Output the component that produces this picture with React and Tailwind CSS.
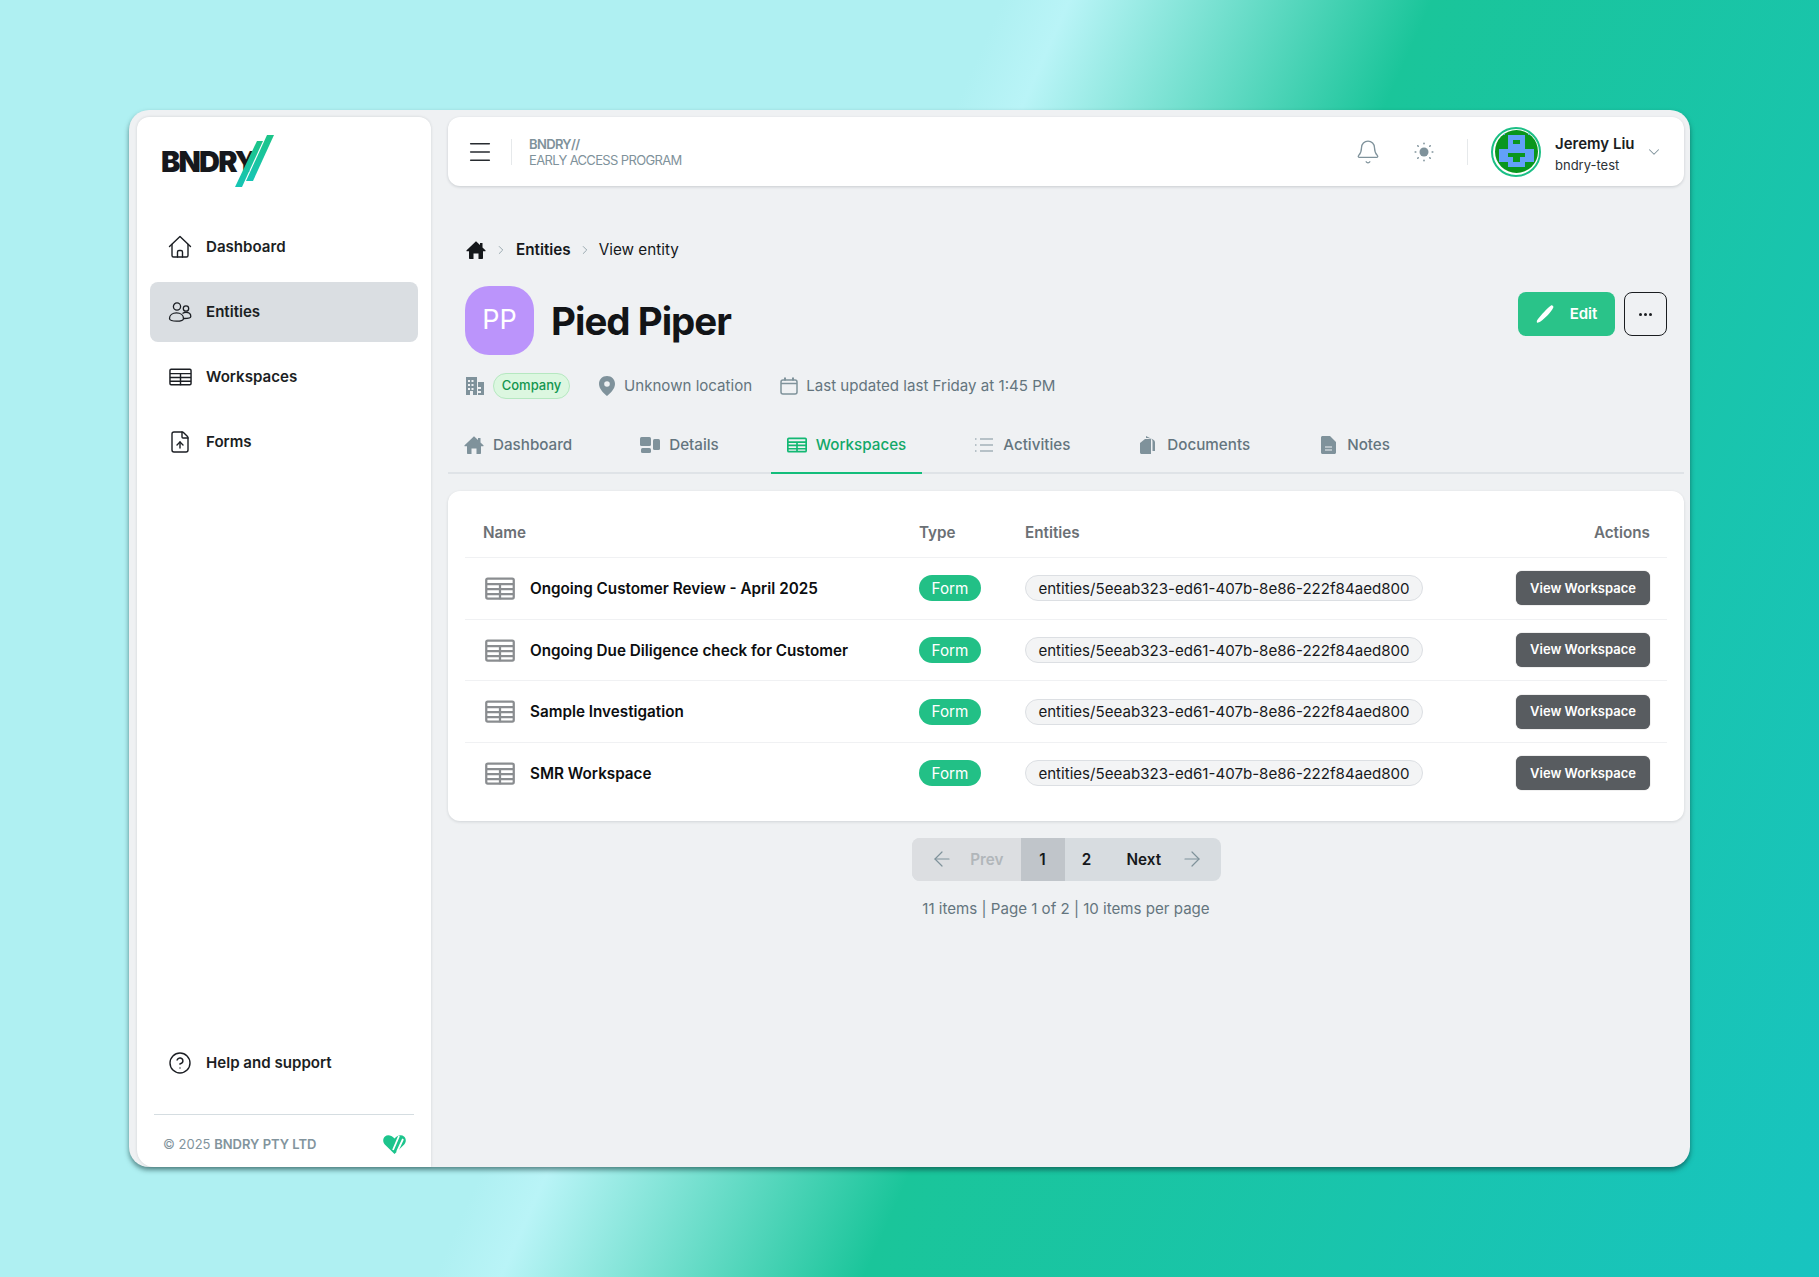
import { ChevronDown, ChevronRight, ArrowLeft, ArrowRight, CircleHelp, FileUp, Bell, Menu } from 'lucide-react';

function Logo() {
  return (
    <div className="relative h-[52px] w-[113px]">
      <span className="absolute left-0 top-[10px] text-[29px] leading-[34px] font-black tracking-[-1.8px] text-[#16181d]">BNDRY</span>
      <svg className="absolute left-0 top-0" width="113" height="52" viewBox="0 0 113 52">
        <defs>
          <linearGradient id="slash" x1="0" y1="0" x2="0" y2="1">
            <stop offset="0" stopColor="#1cc488" />
            <stop offset="1" stopColor="#16c5b5" />
          </linearGradient>
        </defs>
        <polygon points="96,6 102,6 81,52 74,52" fill="url(#slash)" />
        <polygon points="106,0 113,0 92,46 85,46" fill="url(#slash)" />
      </svg>
    </div>
  );
}

function TableIcon({ className, stroke = 'currentColor', width = 1.6 }) {
  return (
    <svg className={className} viewBox="0 0 24 18" fill="none" stroke={stroke} strokeWidth={width}>
      <rect x="1" y="1" width="22" height="16" rx="1.2" />
      <path d="M1 5.5h22M1 9.5h22M1 13.5h22M12 5.5v12" />
    </svg>
  );
}

function UsersIcon() {
  return (
    <svg width="24" height="24" viewBox="0 0 24 24" fill="none" stroke="currentColor" strokeWidth="1.3">
      <circle cx="9" cy="6.5" r="3.6" />
      <circle cx="18" cy="8.5" r="2.7" />
      <path d="M1.5 18.5c0-3.4 3-5.6 7-5.6s7 2.2 7 5.6c0 1.6-3 2.7-7 2.7s-7-1.100-7-2.700z" />
      <path d="M14.500 13.500c1-.8 2.200-1.100 3.500-1.100 2.900 0 4.800 1.700 4.800 4 0 1.500-2.600 2.100-6.800 2.100" />
    </svg>
  );
}

function HomeOutline() {
  return (
    <svg width="24" height="24" viewBox="0 0 24 24" fill="none" stroke="currentColor" strokeWidth="1.4" strokeLinejoin="round" strokeLinecap="round">
      <path d="M1.500 11.500 12 1.500l10.500 10" />
      <path d="M4 9.500v11a1.500 1.500 0 0 0 1.500 1.500h13a1.500 1.500 0 0 0 1.500-1.500v-11" />
      <path d="M9.500 22v-5a1.500 1.500 0 0 1 1.500-1.500h2a1.500 1.500 0 0 1 1.500 1.500v5" />
    </svg>
  );
}

function HomeFill({ className }) {
  return (
    <svg className={className} viewBox="0 0 20 20" fill="currentColor">
      <path d="M10 1.200.6 10.300c-.4.400-.1 1 .4 1H3v6.700c0 .6.400 1 1 1h3.500v-5.500h5V19H16c.6 0 1-.4 1-1v-6.700h2c.5 0 .8-.6.400-1L16.500 7.500V3h-2.500v2.100z" />
    </svg>
  );
}

function Avatar() {
  return (
    <div className="flex h-[50px] w-[50px] items-center justify-center rounded-full border-2 border-[#1cbf85] bg-white">
      <svg className="rounded-full" width="43" height="43" viewBox="0 0 44 44" shapeRendering="crispEdges">
        <rect width="44" height="44" fill="#09961d" />
        <rect x="5" y="0" width="5" height="5" fill="#62a0f8" />
        <rect x="34" y="0" width="5" height="5" fill="#62a0f8" />
        <rect x="13" y="5" width="18" height="15" fill="#62a0f8" />
        <rect x="18" y="10" width="8" height="4" fill="#09961d" />
        <rect x="4" y="19" width="36" height="14" fill="#62a0f8" />
        <rect x="13" y="24" width="18" height="4" fill="#09961d" />
        <rect x="18" y="28" width="8" height="5" fill="#09961d" />
        <rect x="13" y="33" width="18" height="5" fill="#62a0f8" />
      </svg>
    </div>
  );
}

function Sidebar() {
  const items = [
    { label: 'Dashboard', icon: <HomeOutline /> },
    { label: 'Entities', icon: <UsersIcon />, active: true },
    { label: 'Workspaces', icon: <TableIcon className="w-[23px] h-[18px]" width={1.5} /> },
    { label: 'Forms', icon: <FileUp size={24} strokeWidth={1.4} /> },
  ];
  return (
    <aside className="flex w-[294px] shrink-0 flex-col rounded-t-xl rounded-bl-[17px] bg-white shadow-[0_0_3px_rgba(30,40,50,0.15)]">
      <div className="pl-[24px] pt-[18px]">
        <Logo />
      </div>
      <nav className="mt-[30px] flex flex-col gap-[5px] px-[13px]">
        {items.map((item) => (
          <a
            key={item.label}
            className={`flex h-[60px] items-center gap-[14px] rounded-lg pl-[18px] text-[15.1px] font-semibold text-[#1b1e23] ${item.active ? 'bg-[#dadee2]' : ''}`}
          >
            <span className="flex w-[24px] justify-center">{item.icon}</span>
            <span className="pt-[1px]">{item.label}</span>
          </a>
        ))}
      </nav>
      <div className="mt-auto px-[13px]">
        <a className="flex h-[60px] items-center gap-[14px] pl-[18px] text-[15.1px] font-semibold text-[#1b1e23]">
          <span className="flex w-[24px] justify-center">
            <CircleHelp size={24} strokeWidth={1.4} />
          </span>
          <span className="pt-[1px]">Help and support</span>
        </a>
      </div>
      <div className="mx-[17px] mt-[21px] flex h-[53px] items-center justify-between border-t border-[#d5dde1] pl-[9px] pr-[8px] pt-[8px] text-[13px] text-[#82949d]">
        <span>
          © 2025 <b className="font-semibold">BNDRY PTY LTD</b>
        </span>
        <svg width="23" height="20" viewBox="0 0 23 20">
          <path d="M11.500 19 1.800 9.500C-.5 7-.2 3.300 2 1.500 4.300-.4 8-.2 11.500 3.500 15-.2 18.700-.4 21 1.500c2.200 1.800 2.500 5.500.2 8z" fill="#1cc48c" />
          <path d="M10 15 16 1M14 17 20 4" stroke="#fff" strokeWidth="1.800" />
        </svg>
      </div>
    </aside>
  );
}

function Header() {
  return (
    <header className="flex h-[69px] items-center rounded-xl bg-white pl-[23px] pr-[21px] shadow-[0_1px_3px_rgba(30,40,50,0.18)]">
      <Menu size={28} strokeWidth={1.3} className="-mx-[5px] text-[#272b30]" />
      <div className="ml-[22px] h-[26px] w-px bg-[#e6e9eb]" />
      <div className="ml-[17px] text-[13px] leading-[16px] tracking-[-0.65px] text-[#7f929b]">
        <div className="font-semibold">BNDRY//</div>
        <div>EARLY ACCESS PROGRAM</div>
      </div>
      <Bell size={26} strokeWidth={1.2} className="ml-auto text-[#7f929b]" />
      <svg className="ml-[33px]" width="20" height="20" viewBox="0 0 20 20" fill="#7f929b">
        <circle cx="10" cy="10" r="4.500" />
        <g stroke="#7f929b" strokeWidth="1.600" strokeLinecap="round">
          <path d="M10 1.200v.6M10 18.200v.6M1.200 10h.6M18.200 10h.6M3.800 3.800l.4.4M15.800 15.800l.4.4M3.800 16.200l.4-.4M15.800 4.200l.4-.4" />
        </g>
      </svg>
      <div className="ml-[33px] h-[26px] w-px bg-[#e6e9eb]" />
      <div className="ml-[23px]">
        <Avatar />
      </div>
      <div className="ml-[14px] w-[90px] pt-[4px]">
        <div className="text-[15px] leading-[21px] font-semibold text-[#1b1e23]">Jeremy Liu</div>
        <div className="mt-[1px] text-[13px] leading-[20px] text-[#2c3136]">bndry-test</div>
      </div>
      <ChevronDown size={18} strokeWidth={1.4} className="text-[#7f929b]" />
    </header>
  );
}

function Meta() {
  return (
    <div className="mt-[14px] flex h-[34px] items-center pl-[17px] text-[15.1px] text-[#64757e]">
      <svg width="20" height="20" viewBox="0 0 20 20" fill="#7f929b" className="mr-[8px]">
        <path fillRule="evenodd" d="M1 1h11v18H8v-4H5v4H1zM3 4v2h2V4zm3.500 0v2h2V4zM3 8v2h2V8zm3.500 0v2h2V8zM3 12v2h2v-2zm3.500 0v2h2v-2z" />
        <path fillRule="evenodd" d="M13 6h6v13h-6v-2h3v-2h-3v-2h3v-2h-3v-2h3V9h-3z" />
      </svg>
      <span className="flex h-[26px] w-[77px] items-center justify-center rounded-full border border-[#b5e8c0] bg-[#dcf7e0] text-[13px] font-medium text-[#13964f]">
        Company
      </span>
      <svg width="18" height="20" viewBox="0 0 18 20" fill="#7f929b" className="ml-[28px] mr-[8px]">
        <path fillRule="evenodd" d="M9 0C4.300 0 1 3.500 1 8c0 5 5 9.500 8 12 3-2.500 8-7 8-12 0-4.500-3.300-8-8-8zm0 5.200a2.800 2.800 0 1 1 0 5.600 2.800 2.800 0 0 1 0-5.600z" />
      </svg>
      <span>Unknown location</span>
      <svg width="18" height="18" viewBox="0 0 18 18" fill="none" stroke="#7f929b" strokeWidth="1.500" className="ml-[28px] mr-[8px]">
        <rect x="1" y="3" width="16" height="14" rx="2" />
        <path d="M1 6.500h16" />
        <path d="M5 .5v3M13 .5v3" strokeWidth="2" />
      </svg>
      <span>Last updated last Friday at 1:45 PM</span>
    </div>
  );
}

function Tabs() {
  const tabs = [
    { label: 'Dashboard', icon: <HomeFill className="h-[20px] w-[20px]" /> },
    {
      label: 'Details',
      icon: (
        <svg width="20" height="16" viewBox="0 0 20 16" fill="currentColor">
          <rect x="0" y="0" width="11" height="9" rx="1.500" />
          <rect x="13" y="2" width="7" height="11" rx="1.500" />
          <rect x="1" y="11" width="10" height="5" rx="1.500" />
        </svg>
      ),
    },
    { label: 'Workspaces', icon: <TableIcon className="h-[16px] w-[20px]" width={2} />, active: true },
    {
      label: 'Activities',
      icon: (
        <svg width="18" height="14" viewBox="0 0 18 14" fill="none" stroke="currentColor" strokeWidth="1.200">
          <path d="M5 1h13M5 7h13M5 13h13M0 1h1.500M0 7h1.500M0 13h1.500" />
        </svg>
      ),
    },
    {
      label: 'Documents',
      icon: (
        <svg width="16" height="18" viewBox="0 0 16 18" fill="currentColor">
          <path d="M0 7 5 3h6v15H1.500C.700 18 0 17.300 0 16.500z" />
          <path d="M6 0l7 3.500c1.500.8 2 1.800 2 3V15h-2.500V5.500C12.500 3 11 2 6 2z" />
        </svg>
      ),
    },
    {
      label: 'Notes',
      icon: (
        <svg width="15" height="18" viewBox="0 0 15 18" fill="currentColor">
          <path fillRule="evenodd" d="M1.500 0H9l6 6v10.500c0 .8-.7 1.500-1.500 1.500h-12C.700 18 0 17.300 0 16.500v-15C0 .7.700 0 1.500 0zM4 10.500v1h7v-1zM4 13.500v1h7v-1z" />
        </svg>
      ),
    },
  ];
  return (
    <div className="mt-[18px] flex h-[53px] gap-9 border-b-2 border-[#dfe3e7]">
      {tabs.map((tab) => (
        <a
          key={tab.label}
          className={`-mb-[2px] flex h-[53px] items-center border-b-2 px-4 pb-[3px] text-[15.2px] font-medium ${tab.active ? 'border-[#13bd7b] text-[#12a868]' : 'border-transparent text-[#64757e]'}`}
        >
          <span className={`mr-[9px] flex w-[20px] justify-center ${tab.active ? 'text-[#13b873]' : 'text-[#7f929b]'}`}>{tab.icon}</span>
          {tab.label}
        </a>
      ))}
    </div>
  );
}

function WorkspaceTable() {
  const rows = ['Ongoing Customer Review - April 2025', 'Ongoing Due Diligence check for Customer', 'Sample Investigation', 'SMR Workspace'];
  const cols = 'grid grid-cols-[454px_106px_1fr_auto] items-center';
  return (
    <div className="mt-[17px] rounded-xl bg-white px-[17px] pb-[17px] shadow-[0_1px_3px_rgba(30,40,50,0.14)]">
      <div className={`${cols} h-[66px] pr-[17px] pt-[18px] text-[15.25px] font-semibold text-[#6b7075]`}>
        <div className="pl-[18px]">Name</div>
        <div>Type</div>
        <div>Entities</div>
        <div>Actions</div>
      </div>
      {rows.map((name) => (
        <div key={name} className={`${cols} h-[61.7px] border-t border-[#f0f1f3] pr-[17px]`}>
          <div className="flex items-center gap-[15px] pl-[20px] text-[15.25px] font-semibold text-[#0c0e10]">
            <TableIcon className="h-[23px] w-[30px] text-[#8a8d90]" width={1.8} />
            <span className="pt-[2px]">{name}</span>
          </div>
          <div>
            <span className="flex h-[26px] w-[62px] items-center justify-center rounded-full bg-[#22c086] pt-[2px] text-[15.25px] text-white">Form</span>
          </div>
          <div>
            <span className="flex h-[26px] w-[398px] items-center justify-center rounded-full border border-[#dcdfe3] bg-[#f3f4f5] pt-[2px] text-[15.1px] text-[#17191c]">
              entities/5eeab323-ed61-407b-8e86-222f84aed800
            </span>
          </div>
          <button className="h-[34px] w-[134px] rounded-md bg-[#585c60] text-[13px] font-semibold text-white shadow-[0_0_1px_rgba(0,0,0,0.6)]">
            View Workspace
          </button>
        </div>
      ))}
    </div>
  );
}

function Pagination() {
  return (
    <div className="mt-[17px] flex flex-col items-center">
      <div className="flex h-[43px] overflow-hidden rounded-lg bg-[#d7dce0] text-[15.25px] font-semibold">
        <div className="flex w-[109px] items-center justify-between bg-[#dcdee1] pl-[18px] pr-[17px] text-[#b1b6ba]">
          <ArrowLeft size={24} strokeWidth={1.2} className="text-[#7f929b]" />
          <span className="pt-[2px]">Prev</span>
        </div>
        <div className="flex w-[44px] items-center justify-center bg-[#c0c5ca] pt-[2px] text-[#15181b]">1</div>
        <div className="flex w-[44px] items-center justify-center pt-[2px] text-[#15181b]">2</div>
        <div className="flex w-[112px] items-center justify-between pl-[18px] pr-[17px] text-[#15181b]">
          <span className="pt-[2px]">Next</span>
          <ArrowRight size={24} strokeWidth={1.2} className="text-[#7f929b]" />
        </div>
      </div>
      <div className="mt-[18px] text-[15.1px] leading-[20px] text-[#64757e]">11 items | Page 1 of 2 | 10 items per page</div>
    </div>
  );
}

export default function App() {
  return (
    <div className="h-[1277px] overflow-hidden bg-[linear-gradient(114deg,#aff0f2_42%,#b9f4f7_44.8%,#1ac59a_60%,#18c4c0_100%)] px-[129px] py-[110px] font-['Inter',sans-serif]">
      <div className="flex h-[1057px] rounded-[20px] bg-[#eff1f3] pl-[8px] pr-[6px] pt-[7px] shadow-[0_3px_5px_rgba(10,50,50,0.55)]">
        <Sidebar />
        <main className="ml-[17px] flex min-w-0 flex-1 flex-col">
          <Header />
          <div className="mt-[52px] flex h-[24px] items-center pl-[18px] text-[15.25px] text-[#15181b]">
            <HomeFill className="h-[20px] w-[20px] text-[#14171a]" />
            <ChevronRight size={14} strokeWidth={1.3} className="ml-[8px] mr-[8px] text-[#7f929b]" />
            <span className="font-semibold">Entities</span>
            <ChevronRight size={14} strokeWidth={1.3} className="mx-[7px] text-[#7f929b]" />
            <span>View entity</span>
          </div>
          <div className="mt-[24px] flex items-start pl-[17px] pr-[17px]">
            <div className="flex h-[69px] w-[69px] items-center justify-center rounded-[24px] bg-[#bb94fb] text-[27px] text-white">PP</div>
            <h1 className="ml-[17px] mt-[12px] text-[38.5px] leading-[46px] font-bold tracking-[-1px] text-[#121417]">Pied Piper</h1>
            <button className="ml-auto mt-[6px] flex h-[44px] w-[97px] items-center justify-center gap-[15px] rounded-lg bg-[#2ac389] text-[15px] font-semibold text-white">
              <svg width="19" height="18" viewBox="0 0 19 18" fill="#fff">
                <path d="M15 .5c1-.7 2.800.8 2.300 2C15.500 6.500 9 13.500 4.500 16.500c-1.200.8-3 1.500-3.500 1-.5-.6 0-2.500 1-3.500C5 10 11 3.500 15 .5z" />
              </svg>
              Edit
            </button>
            <button className="ml-[9px] mt-[6px] flex h-[44px] w-[43px] items-center justify-center gap-[2px] rounded-lg border border-[#1a1d20]">
              <i className="h-[3px] w-[3px] rounded-full bg-[#1a1d20]" />
              <i className="h-[3px] w-[3px] rounded-full bg-[#1a1d20]" />
              <i className="h-[3px] w-[3px] rounded-full bg-[#1a1d20]" />
            </button>
          </div>
          <Meta />
          <Tabs />
          <WorkspaceTable />
          <Pagination />
        </main>
      </div>
    </div>
  );
}
